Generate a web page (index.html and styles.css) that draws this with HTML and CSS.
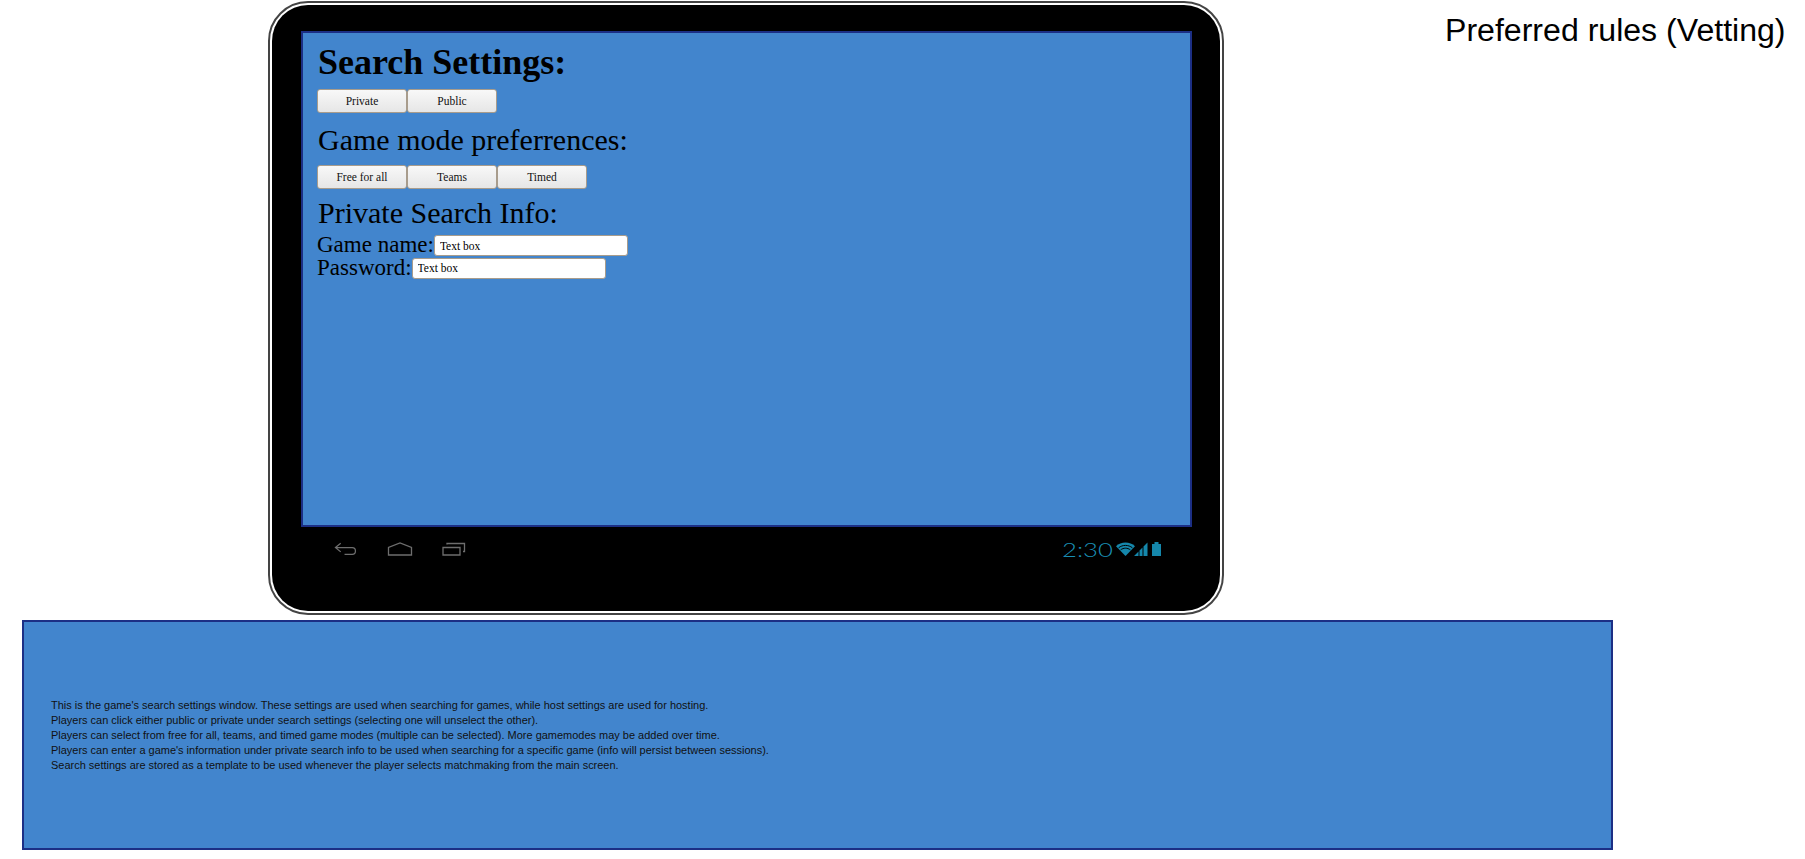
FILE: index.html
```html
<!DOCTYPE html>
<html lang="en">
<head>
    <meta charset="UTF-8">
    <meta name="viewport" content="width=device-width, initial-scale=1.0">
    <title>Search Settings</title>
    <link rel="stylesheet" href="styles.css">
</head>
<body>

    <div class="top-row">
        <!-- Tablet -->
        <div class="device">
            <div class="device-body">
                <div class="screen">
                    <h1>Search Settings:</h1>
                    <div class="button-row">
                        <button>Private</button>
                        <button>Public</button>
                    </div>
                    <h2 class="mode-title">Game mode preferrences:</h2>
                    <div class="button-row">
                        <button>Free for all</button>
                        <button>Teams</button>
                        <button>Timed</button>
                    </div>
                    <h2 class="info-title">Private Search Info:</h2>
                    <div class="field"><label>Game name:</label><input type="text" value="Text box"></div>
                    <div class="field"><label>Password:</label><input type="text" value="Text box"></div>
                </div>

                <!-- Android nav bar -->
                <div class="system-bar">
                    <div class="nav-icons">
                        <svg class="icon-back" width="23" height="14" viewBox="0 0 24 14" fill="none" stroke="#6e6e6e" stroke-width="1.3">
                            <path d="M7 1 L1.5 5.5 L7 10 M1.5 5.5 H19 C23.5 5.5 23.5 12.5 19 12.5 H11"/>
                        </svg>
                        <svg class="icon-home" width="26" height="14" viewBox="0 0 26 14" fill="none" stroke="#6e6e6e" stroke-width="1.3">
                            <path d="M1.5 13 V5.5 L13 1 L24.5 5.5 V13 Z"/>
                        </svg>
                        <svg class="icon-recent" width="24" height="14" viewBox="0 0 24 14" fill="none" stroke="#6e6e6e" stroke-width="1.3">
                            <path d="M1 5.5 H18 V13 H1 Z M5 2.5 V1.5 H22.5 V9.5 H21"/>
                        </svg>
                    </div>
                    <div class="status">
                        <span class="clock">2:30</span>
                        <svg width="19" height="14" viewBox="0 0 19 14" fill="#1587ab">
                            <path d="M9.5 14 L0 4.2 C5 -0.6 14 -0.6 19 4.2 Z"/>
                            <path d="M2.6 5.8 C6.5 2.6 12.5 2.6 16.4 5.8 M4.6 7.9 C7.5 5.6 11.5 5.6 14.4 7.9" stroke="#000" stroke-width="1" fill="none"/>
                        </svg>
                        <svg class="icon-signal" width="14" height="14" viewBox="0 0 14 14" fill="#1587ab">
                            <path d="M0 14 L4.5 9.5 V14 Z M5.5 14 V8.5 L8.5 5.5 V14 Z M9.5 14 V4.5 L13.5 0.5 V14 Z"/>
                        </svg>
                        <svg class="icon-battery" width="9" height="14" viewBox="0 0 9 14" fill="#1587ab">
                            <path d="M0 2 H2.5 V0 H6.5 V2 H9 V14 H0 Z"/>
                        </svg>
                    </div>
                </div>
            </div>
        </div>

        <div class="rules-title">Preferred rules (Vetting)</div>
    </div>

    <!-- Notes -->
    <div class="notes">
        <p>
            This is the game's search settings window. These settings are used when searching for games, while host settings are used for hosting.<br>
            Players can click either public or private under search settings (selecting one will unselect the other).<br>
            Players can select from free for all, teams, and timed game modes (multiple can be selected). More gamemodes may be added over time.<br>
            Players can enter a game's information under private search info to be used when searching for a specific game (info will persist between sessions).<br>
            Search settings are stored as a template to be used whenever the player selects matchmaking from the main screen.
        </p>
    </div>

</body>
</html>
```

FILE: styles.css
```css
body {
    margin: 0;
    padding: 0;
    background: #fff;
    font-family: "Liberation Serif", serif;
    overflow: hidden;
}

.top-row {
    display: flex;
    align-items: flex-start;
    padding: 1px 0 0 268px;
}

/* Tablet */
.device {
    width: 956px;
    height: 614px;
    box-sizing: border-box;
    border: 2px solid #444;
    border-radius: 40px;
    padding: 2px;
    background: #fff;
}
.device-body {
    height: 100%;
    box-sizing: border-box;
    background: #000;
    border-radius: 36px;
    padding: 26px 28px 0 29px;
}

.screen {
    height: 496px;
    box-sizing: border-box;
    background: #4285cd;
    border: 2px solid #1c2f85;
    padding: 9px 14px;
    color: #000;
}
h1 {
    margin: 0;
    padding-left: 1px;
    font-size: 36px;
    line-height: 41px;
    font-weight: bold;
}
h2 {
    margin: 0;
    padding-left: 1px;
    font-size: 30px;
    line-height: 34px;
    font-weight: normal;
}
.mode-title {
    margin-top: 10px;
}
.info-title {
    margin-top: 7px;
}

.button-row {
    display: flex;
    margin-top: 6px;
}
.mode-title + .button-row {
    margin-top: 8px;
}
button {
    width: 90px;
    height: 24px;
    padding: 0;
    border: 1px solid #a89c8c;
    border-radius: 3px;
    background: linear-gradient(#f8f8f8, #e6e6e6);
    font-family: "Liberation Serif", serif;
    font-size: 11.5px;
    color: #111;
}

.field {
    display: flex;
    align-items: flex-start;
    height: 22.5px;
    font-size: 23px;
    line-height: 22px;
}
.field label {
    display: block;
}
input {
    width: 194px;
    height: 21px;
    margin-top: 1px;
    box-sizing: border-box;
    padding: 0 5px;
    border: 1px solid #a89c8c;
    border-radius: 3px;
    background: #fff;
    font-family: "Liberation Serif", serif;
    font-size: 11.5px;
    color: #000;
}
.info-title + .field {
    margin-top: 4px;
}

/* Android system bar */
.system-bar {
    display: flex;
    justify-content: space-between;
    padding: 15px 31px 0 33px;
}
.nav-icons {
    display: flex;
    gap: 30px;
}
.icon-recent {
    margin-left: -1px;
}
.status {
    display: flex;
    align-items: flex-start;
}
.clock {
    display: block;
    width: 50px;
    margin-right: 4px;
    font-family: Lato, sans-serif;
    font-weight: 300;
    font-size: 19px;
    line-height: 15px;
    color: #1a8fb5;
    transform: scaleX(1.35);
    transform-origin: left top;
}
.icon-signal {
    margin-left: -1px;
}
.icon-battery {
    margin-left: 4px;
}

.rules-title {
    margin: 11px 0 0 221px;
    font-family: "Liberation Sans", sans-serif;
    font-size: 32.1px;
    line-height: 37px;
    white-space: nowrap;
    color: #000;
}

/* Notes panel */
.notes {
    display: flex;
    align-items: center;
    width: 1591px;
    height: 230px;
    box-sizing: border-box;
    margin: 5px 0 0 22px;
    padding-left: 27px;
    background: #4285cd;
    border: 2px solid #1c2f85;
}
.notes p {
    margin: 0;
    font-family: "Liberation Sans", sans-serif;
    font-size: 10.97px;
    line-height: 15px;
    color: #111;
}
```
